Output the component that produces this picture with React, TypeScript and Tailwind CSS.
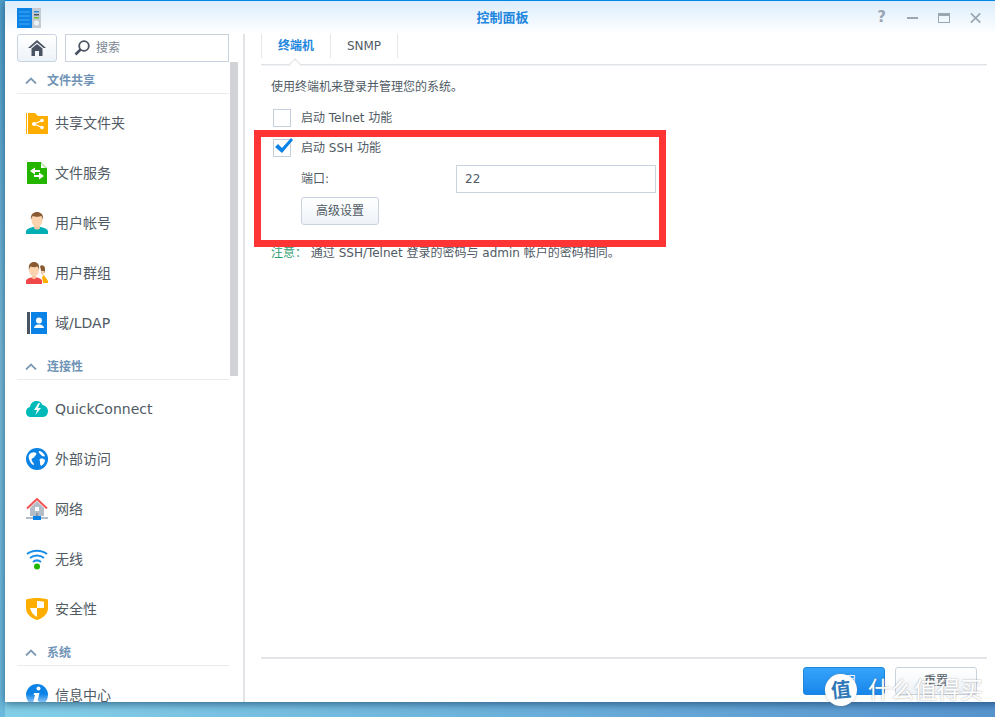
import type { ReactNode } from "react";

const FolderIcon = () => (
  <svg width="22" height="22" viewBox="0 0 22 22">
    <path d="M0 1h1v21H0z" fill="#ffae00" />
    <path d="M2 1h7l3 3h10v18H2z" fill="#ffae00" />
    <g fill="#fff">
      <circle cx="8" cy="12" r="2" />
      <circle cx="16" cy="8.5" r="1.8" />
      <circle cx="16" cy="15.5" r="1.8" />
    </g>
    <path d="M8 12l8-3.500M8 12l8 3.500" stroke="#fff" strokeWidth="1.2" />
  </svg>
);

const FileServiceIcon = () => (
  <svg width="22" height="22" viewBox="0 0 22 22">
    <path d="M1 0h14l6 6v16H1z" fill="#23b500" />
    <path d="M15 0l6 6h-6z" fill="#fff" />
    <path d="M15 0v2l4 4h2z" fill="#b9e8ac" />
    <path d="M9 5.500L4 9l5 3.500V10h5V8H9zM13 10.500V13H8v2h5v2.500l5-3.500z" fill="#fff" />
  </svg>
);

const UserIcon = () => (
  <svg width="22" height="22" viewBox="0 0 22 22">
    <path d="M0 22v-2.500c0-2.500 3.500-3.500 7-4.500h8c3.500 1 7 2 7 4.500V22z" fill="#00aeb3" />
    <path d="M8 13h6v3c-1 2-5 2-6 0z" fill="#f5c7a0" />
    <ellipse cx="11" cy="8" rx="5.500" ry="7" fill="#fbd3ae" />
    <path d="M5 8C4 2 8 0 11 0s7 2 6 8c-.5-2-1-3.500-2-4-2 1-6 1-8 0-1 .5-1.500 2-2 4z" fill="#8a5a33" />
  </svg>
);

const GroupIcon = () => (
  <svg width="22" height="22" viewBox="0 0 22 22">
    <path d="M14 4c2-1.500 5-.5 5 3v3l-3 3z" fill="#8a5a33" />
    <path d="M15 9h3.500c0 2-1 4-2.500 4z" fill="#fbd3ae" />
    <path d="M16 15l2-2 4 6v2h-5z" fill="#ffae00" />
    <path d="M0 22v-3c0-2 3-3 5-3.500h6c2 .5 5 1.500 5 3.500v3z" fill="#f04848" />
    <path d="M6 12h4v4c-1 1.500-3 1.500-4 0z" fill="#f5c7a0" />
    <ellipse cx="8" cy="8" rx="5" ry="6.500" fill="#fbd3ae" />
    <path d="M3 8C2 2 5 0 8 0s6 2 5 8c-.4-2-1-3-1.500-3.500-2 1-5 1-7 0C4 5 3.400 6 3 8z" fill="#8a5a33" />
  </svg>
);

const LdapIcon = () => (
  <svg width="22" height="22" viewBox="0 0 22 22">
    <path d="M1 0h3v22H1z" fill="#4a5362" />
    <path d="M5 0h16v22H5z" fill="#0a82e6" />
    <circle cx="13" cy="8.500" r="3" fill="#fff" />
    <path d="M8 16c0-2 2-3 3.500-3.500h3c1.500.5 3.500 1.500 3.500 3.500z" fill="#fff" />
  </svg>
);

const CloudIcon = () => (
  <svg width="22" height="22" viewBox="0 0 22 22">
    <path d="M5 19c-3 0-5-2-5-5s2-4.500 4-5c.5-3.500 3-6 6.500-6 3 0 5 1.500 6 4 3 .5 5.500 3 5.500 6s-2 6-5 6z" fill="#00b9b9" />
    <path d="M12.500 5L8 12h3l-1.500 5L15 10h-3l2-5z" fill="#fff" />
  </svg>
);

const GlobeIcon = () => (
  <svg width="22" height="22" viewBox="0 0 22 22">
    <circle cx="11" cy="11" r="11" fill="#0a82e6" />
    <path d="M5 5c2-1 4-1 5 0s0 2-1 3-1 2-2 2-2 1-1 3 2 2 2 4c-2 0-4-3-5-6s0-5 2-6zM13 3c2 0 5 2 6 5-1 1-3 0-4-1s-3-3-2-4zM14 11c2-1 4 0 5 1 0 3-2 5-4 6-1-1-1-3-1-4s-1-2 0-3z" fill="#fff" />
  </svg>
);

const NetworkIcon = () => (
  <svg width="22" height="22" viewBox="0 0 22 22">
    <path d="M11 3L4 10v8h14v-8z" fill="#b4bcc8" />
    <path d="M1 10.500L11 1l10 9.500" fill="none" stroke="#f25555" strokeWidth="2" />
    <path d="M9 9h4v4H9z" fill="#fff" />
    <path d="M10 15h2v4h-2z" fill="#8d97a5" />
    <path d="M0 19h22v2H0z" fill="#b4bcc8" />
    <path d="M7 18h8v4H7z" fill="#0a82e6" />
  </svg>
);

const WifiIcon = () => (
  <svg width="22" height="22" viewBox="0 0 22 22" fill="none">
    <path d="M1 6c5.500-4.500 14.500-4.500 20 0" stroke="#1b8fe8" strokeWidth="2" />
    <path d="M4 10c4-3.500 10-3.500 14 0" stroke="#1b8fe8" strokeWidth="2" />
    <path d="M7 14c2.500-2 5.500-2 8 0" stroke="#1b8fe8" strokeWidth="2" />
    <circle cx="11" cy="18.500" r="3" fill="#23b500" />
  </svg>
);

const ShieldIcon = () => (
  <svg width="22" height="22" viewBox="0 0 22 22">
    <path d="M0 1.500C4 .5 7 0 11 0s7 .5 11 1.500V10c0 6-5 10-11 12C5 20 0 16 0 10z" fill="#ffae00" />
    <path d="M11 3c2.500 0 5 .3 7 .8V10h-7zM11 10v9c-3-1.500-6-4.500-7-9z" fill="#fff" />
  </svg>
);

const InfoIcon = () => (
  <svg width="22" height="22" viewBox="0 0 22 22">
    <defs>
      <linearGradient id="infoFill" x1="0" y1="0" x2="0" y2="1">
        <stop offset="0.45" stopColor="#0a82e6" />
        <stop offset="1" stopColor="#bfe0fa" />
      </linearGradient>
    </defs>
    <circle cx="11" cy="11" r="11" fill="url(#infoFill)" />
    <circle cx="12.500" cy="4.500" r="2" fill="#fff" />
    <path d="M8 9h5.500l-2 8H13l-.5 2H7l2-8H7.500z" fill="#fff" />
  </svg>
);

const Caret = () => (
  <svg width="12" height="7" viewBox="0 0 12 7" fill="none">
    <path d="M1 6.500L6 1.500l5 5" stroke="#7e9ab4" strokeWidth="1.800" />
  </svg>
);

const Section = ({ label }: { label: string }) => (
  <div className="mb-1 flex h-8 items-center border-b border-[#e9ecef] pl-2 pt-[6px] text-[12px] font-bold leading-4 text-[#6f93b5]">
    <Caret />
    <span className="ml-[10px]">{label}</span>
  </div>
);

const Item = ({ icon, label }: { icon: ReactNode; label: string }) => (
  <div className="flex h-[50px] shrink-0 items-center pl-[9px] text-[14px] leading-5 text-[#505a64]">
    <span className="flex w-[22px] justify-center">{icon}</span>
    <span className="ml-[7px]">{label}</span>
  </div>
);

const Checkbox = ({ checked }: { checked?: boolean }) => (
  <span className="relative block size-[18px] border border-[#c5cfdc] bg-white">
    {checked && (
      <svg className="absolute -top-[3px] left-0" width="20" height="18" viewBox="0 0 20 18">
        <path d="M1 10l3-3 4 4L17 1l2 2L8 16z" fill="#0a82e6" />
      </svg>
    )}
  </span>
);

export default function App() {
  return (
    <div className="relative h-[717px] w-[995px] overflow-hidden bg-gradient-to-r from-[#84d0e8] to-[#5794ce] font-['DejaVu_Sans','Noto_Sans_CJK_SC',sans-serif]">
      {/* desktop strip on the left */}
      <div className="absolute inset-y-0 left-0 w-[5px] bg-gradient-to-b from-[#4f9fc9] via-[#79bcd8] to-[#6bb9dc]" />

      <div className="relative ml-[5px] flex h-[702px] w-[995px] flex-col overflow-hidden border-t border-[#0086e6] bg-white shadow-[0_2px_8px_rgba(0,40,80,0.6)]">
        {/* title bar */}
        <div className="flex h-[33px] shrink-0 items-center bg-gradient-to-b from-[#dcedfb] to-white">
          <div className="flex w-[124px] pl-3">
            <svg width="24" height="20" viewBox="0 0 24 20">
              <path d="M0 0h15v20H0z" fill="#0a82e6" />
              <path d="M2 4h11M2 8h11M2 12h11M2 16h11" stroke="#5cb8f5" strokeWidth="0.800" />
              <path d="M15 0h9v20h-9z" fill="#c4cbd3" />
              <path d="M17 3h5v1.500h-5z" fill="#2b8fcf" />
              <path d="M17 6h5v1.500h-5z" fill="#4a5362" />
              <path d="M17 9h5v1.500h-5z" fill="#6fc22d" />
              <circle cx="19.500" cy="15" r="2.500" fill="#eef3f7" />
            </svg>
          </div>
          <div className="flex-1 text-center text-[13px] font-bold leading-4 text-[#1f86de]">控制面板</div>
          <div className="flex w-[124px] items-center gap-5 pr-[19px] text-[#9aa6b4]">
            <span className="w-3 text-center text-[15px] font-bold leading-none">?</span>
            <span className="h-[2px] w-3 bg-[#9aa6b4]" />
            <span className="h-[10px] w-3 border border-t-[3px] border-[#9aa6b4]" />
            <svg width="12" height="12" viewBox="0 0 12 12">
              <path d="M1 1l10 10M11 1L1 11" stroke="#9aa6b4" strokeWidth="1.800" />
            </svg>
          </div>
        </div>

        <div className="flex min-h-0 flex-1">
          {/* sidebar */}
          <aside className="relative w-[240px] shrink-0 overflow-hidden border-r-2 border-[#e2e4e7] pl-3 pr-[14px]">
            <div className="flex h-7 gap-2">
              <button className="flex w-10 items-center justify-center rounded-[3px] border border-[#c8d3e0] bg-gradient-to-b from-white to-[#eef3f8]">
                <svg width="18" height="16" viewBox="0 0 18 16">
                  <path d="M9 0L0 8h2.500L9 2.500 15.500 8H18z" fill="#4a5362" />
                  <path d="M3.500 8.500L9 4l5.500 4.500V16H11v-5H7v5H3.500z" fill="#4a5362" />
                </svg>
              </button>
              <div className="flex flex-1 items-center border border-[#c8d3e0] pl-[8px] text-[12px] text-[#7c8794]">
                <svg width="16" height="16" viewBox="0 0 16 16" fill="none">
                  <circle cx="10" cy="6" r="4.800" stroke="#4a5362" strokeWidth="1.800" />
                  <path d="M6.500 9.500L1.500 14.500" stroke="#4a5362" strokeWidth="2.600" />
                </svg>
                <span className="ml-[6px]">搜索</span>
              </div>
            </div>

            <Section label="文件共享" />
            <Item icon={<FolderIcon />} label="共享文件夹" />
            <Item icon={<FileServiceIcon />} label="文件服务" />
            <Item icon={<UserIcon />} label="用户帐号" />
            <Item icon={<GroupIcon />} label="用户群组" />
            <Item icon={<LdapIcon />} label="域/LDAP" />
            <Section label="连接性" />
            <Item icon={<CloudIcon />} label="QuickConnect" />
            <Item icon={<GlobeIcon />} label="外部访问" />
            <Item icon={<NetworkIcon />} label="网络" />
            <Item icon={<WifiIcon />} label="无线" />
            <Item icon={<ShieldIcon />} label="安全性" />
            <Section label="系统" />
            <Item icon={<InfoIcon />} label="信息中心" />

            {/* scrollbar */}
            <div className="absolute left-[225px] top-[28px] h-[314px] w-2 bg-[#d1d3d7]" />
          </aside>

          {/* content */}
          <main className="flex min-w-0 flex-1 flex-col pl-4 pr-[13px]">
            <div className="relative flex h-[31px] shrink-0 border-b border-[#dfe3e8] shadow-[0_1px_0_#f1f2f4]">
              <div className="flex h-6 w-[70px] items-center justify-center border-x border-[#e3e7ec] text-[12px] font-bold text-[#1f86de]">
                终端机
              </div>
              <div className="flex h-6 w-[67px] items-center justify-center border-r border-[#e3e7ec] text-[12px] text-[#505a64]">
                SNMP
              </div>
              <span className="absolute left-[30px] top-[26px] size-[8px] rotate-45 border-l border-t border-[#dfe3e8] bg-white" />
            </div>

            <div className="flex-1 pl-[10px] pt-[14px] text-[12px] text-[#505a64]">
              <p className="leading-[16px]">使用终端机来登录并管理您的系统。</p>
              <div className="mt-[14px] flex h-[18px] items-center pl-[2px]">
                <Checkbox />
                <span className="ml-[10px]">启动 Telnet 功能</span>
              </div>
              <div className="mt-3 flex h-[18px] items-center pl-[2px]">
                <Checkbox checked />
                <span className="ml-[10px]">启动 SSH 功能</span>
              </div>
              <div className="mt-2 flex h-7 items-center pl-[30px]">
                <span className="w-[155px]">端口:</span>
                <div className="flex h-7 w-[200px] items-center border border-[#c8d3e0] pl-2 text-[12px]">22</div>
              </div>
              <button className="ml-[30px] mt-1 block h-7 w-[78px] rounded-[3px] border border-[#c8d3e0] bg-gradient-to-b from-white to-[#eef3f8] text-[12px] text-[#505a64]">
                高级设置
              </button>
              <p className="mt-5 leading-[16px]">
                <span className="text-[#2f9e6e]">注意：</span> 通过 SSH/Telnet 登录的密码与 admin 帐户的密码相同。
              </p>
            </div>

            <div className="flex h-[45px] shrink-0 justify-end gap-[10px] border-t-2 border-[#e3e5e8] pr-[10px] pt-2">
              <button className="h-7 w-[82px] rounded-[3px] border border-[#1b86e0] bg-gradient-to-b from-[#35a4fb] to-[#1686ea] text-[12px] text-white">
                应用
              </button>
              <button className="h-7 w-[82px] rounded-[3px] border border-[#c8d3e0] bg-gradient-to-b from-white to-[#eef3f8] text-[12px] text-[#505a64]">
                重置
              </button>
            </div>
          </main>
        </div>
      </div>

      {/* red annotation box */}
      <div className="absolute left-[254px] top-[130px] h-[117px] w-[412px] border-[7px] border-[#ff3535]" />

      {/* watermark */}
      <div className="absolute left-[825px] top-[674px] flex items-center">
        <span className="flex size-8 -rotate-6 items-center justify-center rounded-full bg-white text-[20px] font-bold leading-none text-[#2f78b8] shadow-[0_0_2px_rgba(120,120,120,0.6)]">值</span>
        <span className="ml-[11px] text-[23px] leading-none text-white [text-shadow:0_0_2px_rgba(120,120,120,0.7)]">什么值得买</span>
      </div>
    </div>
  );
}
